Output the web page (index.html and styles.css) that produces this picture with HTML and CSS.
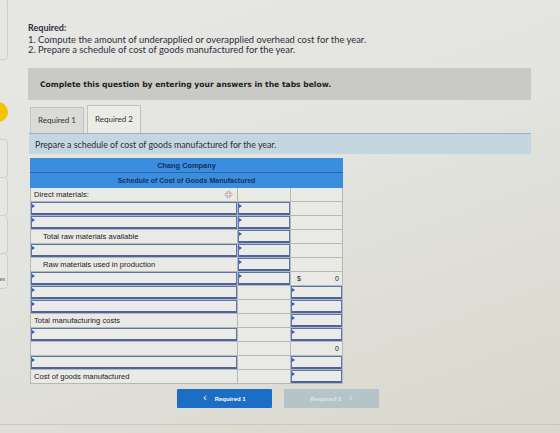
FILE: index.html
```html
<!DOCTYPE html>
<html lang="en">
<head>
<meta charset="utf-8">
<title>Schedule of Cost of Goods Manufactured</title>
<link rel="stylesheet" href="styles.css">
</head>
<body>
<div class="page">
  <aside class="rail">
    <div class="rail-card rail-top"></div>
    <span class="rail-dot"></span>
    <div class="rail-stack">
      <div class="rail-card"></div>
      <div class="rail-card"></div>
      <div class="rail-card"></div>
      <div class="rail-card rail-last"><span class="rail-label">es</span></div>
    </div>
  </aside>

  <main class="main">
    <section class="req">
      <h2 class="req-title">Required:</h2>
      <p>1. Compute the amount of underapplied or overapplied overhead cost for the year.</p>
      <p>2. Prepare a schedule of cost of goods manufactured for the year.</p>
    </section>

    <div class="notice">Complete this question by entering your answers in the tabs below.</div>

    <div class="tabs">
      <div class="tab">Required 1</div>
      <div class="tab tab-active">Required 2</div>
    </div>
    <div class="instr">Prepare a schedule of cost of goods manufactured for the year.</div>

    <table class="sched">
      <colgroup><col class="c1"><col class="c2"><col class="c3"></colgroup>
      <thead>
        <tr class="hd hd-1"><th colspan="3">Chang Company</th></tr>
        <tr class="hd hd-2"><th colspan="3">Schedule of Cost of Goods Manufactured</th></tr>
      </thead>
      <tbody>
        <tr>
          <td class="lbl lbl-move">Direct materials:
            <svg class="move" viewBox="0 0 10 10" width="9" height="9" aria-hidden="true">
              <path d="M5 0.6 L7 2.6 H5.9 V4.1 H7.4 V3 L9.4 5 L7.4 7 V5.9 H5.9 V7.4 H7 L5 9.4 L3 7.4 H4.1 V5.9 H2.6 V7 L0.6 5 L2.6 3 V4.1 H4.1 V2.6 H3 Z" fill="none" stroke="#b899a8" stroke-width="0.8" stroke-linejoin="round"/>
            </svg>
          </td>
          <td></td><td></td>
        </tr>
        <tr><td><div class="inp"></div></td><td><div class="inp"></div></td><td></td></tr>
        <tr><td><div class="inp"></div></td><td><div class="inp"></div></td><td></td></tr>
        <tr><td class="lbl ind">Total raw materials available</td><td><div class="inp"></div></td><td></td></tr>
        <tr><td><div class="inp"></div></td><td><div class="inp"></div></td><td></td></tr>
        <tr><td class="lbl ind">Raw materials used in production</td><td><div class="inp"></div></td><td></td></tr>
        <tr><td><div class="inp"></div></td><td><div class="inp"></div></td><td class="num"><span class="cur">$</span>0</td></tr>
        <tr><td><div class="inp"></div></td><td></td><td><div class="inp"></div></td></tr>
        <tr><td><div class="inp"></div></td><td></td><td><div class="inp"></div></td></tr>
        <tr><td class="lbl">Total manufacturing costs</td><td></td><td><div class="inp"></div></td></tr>
        <tr><td><div class="inp"></div></td><td></td><td><div class="inp"></div></td></tr>
        <tr><td></td><td></td><td class="num">0</td></tr>
        <tr><td><div class="inp"></div></td><td></td><td><div class="inp"></div></td></tr>
        <tr><td class="lbl">Cost of goods manufactured</td><td></td><td><div class="inp"></div></td></tr>
      </tbody>
    </table>

    <nav class="pager">
      <button class="btn btn-prev" type="button"><span class="chev">&lsaquo;</span>Required 1</button>
      <button class="btn btn-next" type="button" disabled>Required 2<span class="chev">&rsaquo;</span></button>
    </nav>
  </main>
</div>
</body>
</html>
```

FILE: styles.css
```css
* { box-sizing: border-box; }

html, body {
  margin: 0;
  width: 560px;
  height: 433px;
  overflow: hidden;
}

body {
  background: linear-gradient(160deg, #e7e7e5 0%, #e3e3df 45%, #dcdcd3 80%, #d8d8ce 100%);
  font-family: Lato, "Open Sans", sans-serif;
  color: #333;
}

.page {
  display: flex;
  height: 425px;
  border-bottom: 1px solid #c9c9c2;
}

/* left rail with the question list */
.rail {
  position: relative;
  width: 10px;
  flex: none;
  overflow: hidden;
}

.rail-card {
  margin-left: -14px;
  width: 22px;
  border: 1px solid #cfcfcb;
  border-radius: 4px;
  background: #e6e6e3;
}

.rail-top {
  height: 62px;
  margin-top: -2px;
}

.rail-stack {
  margin-top: 80px;
  display: flex;
  flex-direction: column;
}

.rail-stack .rail-card {
  height: 39px;
  margin-top: -1px;
}

.rail-last {
  height: 36px !important;
  display: flex;
  align-items: flex-end;
  justify-content: flex-end;
  padding: 0 2px 6px 0;
}

.rail-label {
  font-size: 6px;
  color: #666;
  line-height: 6px;
}

.rail-dot {
  position: absolute;
  left: -12px;
  top: 102px;
  width: 20px;
  height: 20px;
  border-radius: 50%;
  background: #f3c300;
}

/* main column */
.main {
  margin-left: 18px;
  width: 503px;
  display: flex;
  flex-direction: column;
}

.req {
  padding-top: 23px;
  font-size: 9.4px;
  line-height: 10px;
  color: #2f2f3a;
}

.req-title {
  margin: 0 0 2px;
  font-size: 9px;
  font-weight: 700;
  line-height: 10px;
}

.req p {
  margin: 0;
}

.notice {
  margin-top: 13px;
  height: 32px;
  padding-left: 12px;
  display: flex;
  align-items: center;
  background: #c9c9c6;
  font-family: "DejaVu Sans", Verdana, sans-serif;
  font-weight: 700;
  font-size: 7.6px;
  color: #222;
}

.tabs {
  margin-top: 5px;
  padding-left: 2px;
  display: flex;
  align-items: flex-end;
  gap: 3px;
  height: 29px;
}

.tab {
  width: 54px;
  height: 27px;
  display: flex;
  align-items: center;
  justify-content: center;
  border: 1px solid #c2c2be;
  border-bottom: none;
  background: #dadad7;
  font-size: 8px;
  color: #333;
  padding-bottom: 2px;
}

.tab-active {
  height: 29px;
  background: #ebebe8;
}

.instr {
  margin: -1px 0 0 1px;
  height: 21px;
  padding-left: 6px;
  display: flex;
  align-items: center;
  background: #c4d7e0;
  border-top: 1px solid #9fb0ba;
  font-size: 8.8px;
  color: #2e2e36;
}

/* schedule table */
.sched {
  margin: 4px 0 0 2px;
  width: 312px;
  border-collapse: collapse;
  table-layout: fixed;
  font-family: "Liberation Sans", Arial, sans-serif;
  font-size: 7.6px;
  color: #1c1c1c;
}

.c1 { width: 207px; }
.c2 { width: 53px; }
.c3 { width: 52px; }

.hd th {
  background: #3b8de0;
  color: #16305e;
  font-weight: 700;
  font-size: 7.4px;
  padding: 0;
  border: 1px solid #3b8de0;
}

.hd-1 th {
  height: 14px;
  border-bottom: 1px solid #2a63a6;
}

.hd-2 th {
  height: 15px;
  font-size: 7px;
}

.sched td {
  height: 14px;
  padding: 0;
  border: 1px solid #b7b7b4;
  background: #e9e9e5;
  vertical-align: middle;
  line-height: 12px;
}

.sched td.lbl {
  padding-left: 3px;
  white-space: nowrap;
}

.sched td.ind {
  padding-left: 12px;
}

.lbl-move {
  position: relative;
}

.move {
  position: absolute;
  right: 4px;
  top: 2px;
}

.sched td.num {
  text-align: right;
  padding: 0 3px 0 6px;
  font-size: 7px;
}

.cur {
  float: left;
}

.inp {
  position: relative;
  height: 13px;
  border: 1px solid #5c74ad;
  border-bottom: 2px solid #4a64a4;
  background: #ebebe7;
}

.inp::before {
  content: "";
  position: absolute;
  left: 0;
  top: 1px;
  border-top: 2px solid transparent;
  border-bottom: 2px solid transparent;
  border-left: 3px solid #2a62c9;
}

/* tab pager */
.pager {
  margin-top: 5px;
  padding-left: 149px;
  display: flex;
  gap: 12px;
}

.btn {
  width: 95px;
  height: 19px;
  border: none;
  border-radius: 1px;
  display: flex;
  align-items: center;
  justify-content: center;
  gap: 8px;
  font-family: "Liberation Sans", Arial, sans-serif;
  font-weight: 700;
  font-size: 6px;
  padding: 0;
}

.btn-prev {
  background: #1c6ec4;
  color: #fff;
}

.btn-next {
  background: #b6c4c9;
  color: #dfe6e8;
}

.chev {
  font-size: 10px;
  font-weight: 400;
  line-height: 10px;
  margin-top: -2px;
}
```
